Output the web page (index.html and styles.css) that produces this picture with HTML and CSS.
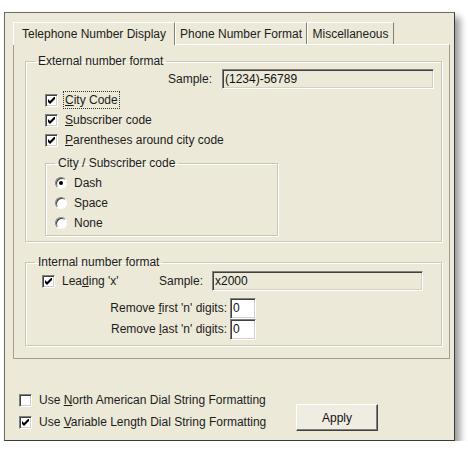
FILE: index.html
```html
<!DOCTYPE html>
<html lang="en">

<head>
    <meta charset="UTF-8">
    <title>Telephony Options</title>
    <link rel="stylesheet" href="styles.css">
</head>

<body>
    <div class="dialog">
        <div class="tabs">
            <div class="tab tab-active tab-display">Telephone Number Display</div>
            <div class="tab tab-format">Phone Number Format</div>
            <div class="tab tab-misc">Miscellaneous</div>
        </div>

        <div class="panel">
            <fieldset class="group group-external">
                <legend>External number format</legend>
                <div class="group-body external-body">
                    <div class="sample-row">
                        <span class="sample-label">Sample:</span>
                        <input class="field field-readonly field-sample" value="(1234)-56789" readonly>
                    </div>
                    <div class="check-row">
                        <span class="check"><svg viewBox="0 0 7 7" width="7" height="7"><polygon points="0,2 2,4 7,-1 7,2 2,7 0,5" /></svg></span>
                        <span class="focus"><u>C</u>ity Code</span>
                    </div>
                    <div class="check-row">
                        <span class="check"><svg viewBox="0 0 7 7" width="7" height="7"><polygon points="0,2 2,4 7,-1 7,2 2,7 0,5" /></svg></span>
                        <span><u>S</u>ubscriber code</span>
                    </div>
                    <div class="check-row">
                        <span class="check"><svg viewBox="0 0 7 7" width="7" height="7"><polygon points="0,2 2,4 7,-1 7,2 2,7 0,5" /></svg></span>
                        <span><u>P</u>arentheses around city code</span>
                    </div>

                    <fieldset class="group group-separator">
                        <legend>City / Subscriber code</legend>
                        <div class="group-body separator-body">
                            <div class="radio-row"><span class="radio radio-on"></span>Dash</div>
                            <div class="radio-row"><span class="radio"></span>Space</div>
                            <div class="radio-row"><span class="radio"></span>None</div>
                        </div>
                    </fieldset>
                </div>
            </fieldset>

            <fieldset class="group group-internal">
                <legend>Internal number format</legend>
                <div class="group-body internal-body">
                    <div class="leading-row">
                        <span class="check"><svg viewBox="0 0 7 7" width="7" height="7"><polygon points="0,2 2,4 7,-1 7,2 2,7 0,5" /></svg></span>
                        <span>Lea<u>d</u>ing 'x'</span>
                        <span class="sample-label sample-internal">Sample:</span>
                        <input class="field field-readonly field-sample-internal" value="x2000" readonly>
                    </div>
                    <div class="digits-row digits-first">
                        <span class="digits-label">Remove <u>f</u>irst 'n' digits:</span>
                        <input class="field field-digits" value="0">
                    </div>
                    <div class="digits-row">
                        <span class="digits-label">Remove <u>l</u>ast 'n' digits:</span>
                        <input class="field field-digits" value="0">
                    </div>
                </div>
            </fieldset>
        </div>

        <div class="footer">
            <div class="footer-checks">
                <div class="check-row">
                    <span class="check"></span>
                    <span>Use <u>N</u>orth American Dial String Formatting</span>
                </div>
                <div class="check-row">
                    <span class="check"><svg viewBox="0 0 7 7" width="7" height="7"><polygon points="0,2 2,4 7,-1 7,2 2,7 0,5" /></svg></span>
                    <span>Use <u>V</u>ariable Length Dial String Formatting</span>
                </div>
            </div>
            <button class="apply-btn">Apply</button>
        </div>
    </div>
</body>

</html>
```

FILE: styles.css
```css
body {
    margin: 0;
    background: #fff;
    font-family: "Liberation Sans", Arial, sans-serif;
    font-size: 12px;
    color: #1c1c1c;
}

.dialog {
    box-sizing: border-box;
    width: 451px;
    height: 429px;
    margin: 12px 0 0 4px;
    padding: 9px 4px 0 8px;
    background: #ece9d8;
    border: 1px solid #6c6c66;
    border-right-color: #3a3a36;
    border-bottom-color: #3a3a36;
    box-shadow: 5px 5px 7px rgba(0, 0, 0, 0.4);
}

/* tab strip */
.tabs {
    display: flex;
    height: 22px;
}

.tab {
    box-sizing: border-box;
    height: 22px;
    display: flex;
    align-items: center;
    justify-content: center;
    border-top: 1px solid #fff;
    border-left: 1px solid #fff;
    border-right: 1px solid #7f7f76;
}

.tab-active {
    height: 23px;
    margin-bottom: -1px;
    position: relative;
    background: #ece9d8;
}

.tab-display {
    width: 162px;
}

.tab-format {
    width: 132px;
}

.tab-misc {
    width: 87px;
}

.panel {
    box-sizing: border-box;
    height: 315px;
    padding: 9px 7px 0 11px;
    border: 1px solid #a09f95;
    border-top-color: #fff;
}

/* group boxes */
.group {
    margin: 0;
    padding: 0;
    min-width: 0;
    border: 1px solid #c9c7b6;
    box-shadow: inset 1px 1px #fff, 1px 1px #fff;
}

.group legend {
    margin-left: 9px;
    padding: 0 3px;
    line-height: 14px;
}

.external-body {
    padding: 1px 7px 5px 19px;
}

.sample-row {
    display: flex;
    justify-content: flex-end;
    align-items: flex-start;
    height: 21px;
}

.sample-label {
    margin-right: 10px;
    line-height: 20px;
}

.check-row,
.radio-row {
    display: flex;
    align-items: center;
    height: 20px;
    gap: 7px;
}

.check {
    box-sizing: border-box;
    width: 13px;
    height: 13px;
    display: flex;
    align-items: center;
    justify-content: center;
    background: #fff;
    border: 1px solid;
    border-color: #808080 #fff #fff #808080;
    box-shadow: inset 1px 1px #404040, inset -1px -1px #d4d0c8;
}

.check svg {
    fill: #000;
}

.focus {
    outline: 1px dotted #333;
    outline-offset: 1px;
}

.group-separator {
    width: 231px;
    margin-top: 6px;
}

.separator-body {
    padding: 3px 0 2px 9px;
}

.radio {
    box-sizing: border-box;
    width: 12px;
    height: 12px;
    border-radius: 50%;
    background: #fff;
    border: 1px solid;
    border-color: #808080 #fff #fff #808080;
    box-shadow: inset 1px 1px #404040;
    display: flex;
    align-items: center;
    justify-content: center;
}

.radio-on::after {
    content: "";
    width: 4px;
    height: 4px;
    border-radius: 50%;
    background: #000;
}

.group-internal {
    margin-top: 13px;
}

.internal-body {
    padding: 1px 18px 6px 16px;
}

.leading-row {
    display: flex;
    align-items: center;
    height: 22px;
    gap: 7px;
}

.sample-internal {
    margin-left: auto;
    margin-right: 2px;
}

.digits-row {
    display: flex;
    align-items: center;
    height: 20px;
    margin-top: 1px;
}

.digits-first {
    margin-top: 6px;
}

.digits-label {
    width: 185px;
    margin-right: 3px;
    text-align: right;
}

/* edit fields */
.field {
    box-sizing: border-box;
    margin: 0;
    padding: 0 2px;
    font-family: inherit;
    font-size: 12px;
    color: #111;
    border: 1px solid;
    border-color: #808080 #fff #fff #808080;
    box-shadow: inset 1px 1px #404040, inset -1px -1px #d4d0c8;
    outline: none;
}

.field-readonly {
    background: #ece9d8;
}

.field-sample {
    width: 212px;
    height: 20px;
}

.field-sample-internal {
    width: 211px;
    height: 20px;
}

.field-digits {
    width: 26px;
    height: 21px;
    background: #fff;
}

/* bottom of the dialog */
.footer {
    display: flex;
    padding: 30px 0 0 6px;
}

.footer-checks {
    width: 277px;
}

.footer .check-row {
    height: 22px;
}

.apply-btn {
    margin-top: 15px;
    width: 82px;
    height: 27px;
    font-family: inherit;
    font-size: 12px;
    color: #111;
    background: #efede2;
    border: 1px solid;
    border-color: #fff #404040 #404040 #fff;
    box-shadow: inset -1px -1px #808080;
    padding: 0;
}
```
